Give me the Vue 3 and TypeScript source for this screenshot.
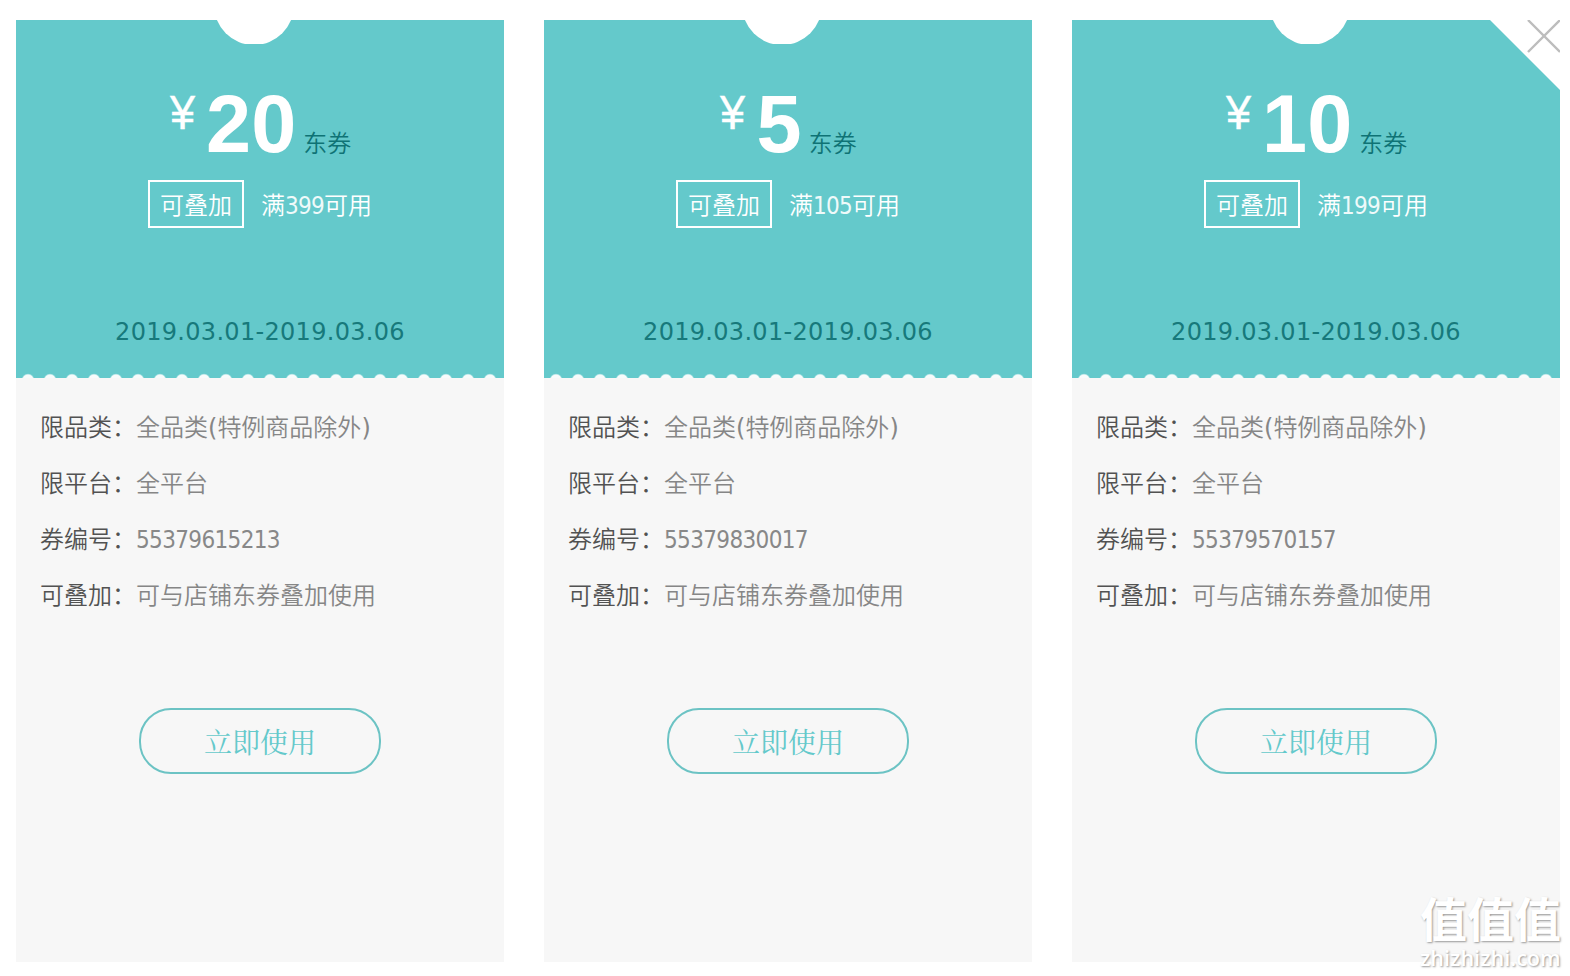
<template>
  <div class="coupon-page">
    <div v-for="(item, index) in coupons" :key="item.code" class="coupon">
      <div class="coupon-head">
        <div class="notch"><i></i></div>
        <div class="price">
          <span class="symbol">¥</span>
          <strong class="amount">{{ item.amount }}</strong>
          <span class="kind">东券</span>
        </div>
        <div class="condition">
          <span class="tag">可叠加</span>
          <span>满<span class="num">{{ item.limit }}</span>可用</span>
        </div>
        <div class="date">{{ item.date }}</div>
        <svg v-if="index === coupons.length - 1" class="corner" viewBox="0 0 72 72">
          <path d="M2 0H72V70Z" fill="#fff" />
          <path d="M40 0L72 32M72 0L40 32" stroke="#bdbdbd" stroke-width="2.4" />
        </svg>
      </div>
      <div class="coupon-body">
        <div v-for="row in getRows(item)" :key="row.label" class="row">
          <span class="label">{{ row.label }}：</span>
          <span class="value" :class="{ num: row.isNum }">{{ row.value }}<template v-if="row.note"><span class="paren">(</span>{{ row.note }}<span class="paren">)</span></template></span>
        </div>
        <button class="use-btn">立即使用</button>
      </div>
    </div>
    <div class="watermark">
      <div class="mark-name">值值值</div>
      <div class="mark-site">zhizhizhi.com</div>
    </div>
  </div>
</template>

<script setup lang="ts">
import { ref } from 'vue'

interface Coupon {
  amount: number
  limit: number
  date: string
  code: string
}

interface Row {
  label: string
  value: string
  note?: string
  isNum?: boolean
}

const coupons = ref<Coupon[]>([
  { amount: 20, limit: 399, date: '2019.03.01-2019.03.06', code: '55379615213' },
  { amount: 5, limit: 105, date: '2019.03.01-2019.03.06', code: '55379830017' },
  { amount: 10, limit: 199, date: '2019.03.01-2019.03.06', code: '55379570157' },
])

const getRows = (item: Coupon): Row[] => [
  { label: '限品类', value: '全品类', note: '特例商品除外' },
  { label: '限平台', value: '全平台' },
  { label: '券编号', value: item.code, isNum: true },
  { label: '可叠加', value: '可与店铺东券叠加使用' },
]
</script>

<style>
body {
  margin: 0;
  background: #fff;
}
</style>

<style scoped>
.coupon-page {
  position: relative;
  box-sizing: border-box;
  width: 1570px;
  height: 976px;
  padding: 20px 10px 14px 16px;
  display: flex;
  gap: 40px;
  overflow: hidden;
  font-family: "Noto Sans CJK SC", sans-serif;
  font-size: 24px;
  font-weight: 350;
}

.coupon {
  width: 488px;
  height: 942px;
  background: #f7f7f7;
}

.coupon-head {
  position: relative;
  box-sizing: border-box;
  height: 358px;
  padding-top: 62px;
  background: #64c9cb;
  color: #fff;
}

/* 底部锯齿 */
.coupon-head::after {
  content: "";
  position: absolute;
  left: 1px;
  right: 0;
  bottom: 0;
  height: 5px;
  background: radial-gradient(circle at 11px 7px, #f7fbfb 5px, transparent 6.6px) 0 0 / 22px 5px repeat-x;
}

.notch {
  position: absolute;
  top: 0;
  left: 196px;
  width: 84px;
  height: 24px;
  overflow: hidden;
}

.notch i {
  display: block;
  width: 80px;
  height: 80px;
  margin: -55px auto 0;
  border-radius: 50%;
  background: #fff;
}

.price {
  display: flex;
  justify-content: center;
  height: 80px;
}

.symbol {
  margin-right: 10px;
  font: 49px/60px "Liberation Sans", Arial, sans-serif;
  transform: scaleX(0.92);
  -webkit-text-stroke: 0.4px #fff;
}

.amount {
  font: bold 81px/84px "Liberation Sans", Arial, sans-serif;
}

.kind {
  margin-left: 7px;
  line-height: 119px;
  color: #0f7375;
}

.condition {
  display: flex;
  justify-content: center;
  gap: 17px;
  margin-top: 18px;
  line-height: 48px;
}

.tag {
  box-sizing: border-box;
  width: 96px;
  height: 48px;
  padding: 0 10px;
  border: 2px solid #fff;
  line-height: 44px;
}

.num {
  font-family: "DejaVu Sans Condensed", "DejaVu Sans", Tahoma, sans-serif;
  font-stretch: condensed;
  font-weight: 400;
  letter-spacing: -0.7px;
}

.condition .num {
  color: #effafa;
}

.paren {
  font-family: "DejaVu Sans", Tahoma, sans-serif;
  font-weight: 400;
  line-height: 1;
}

.date {
  margin-top: 82px;
  font: 24px/40px "DejaVu Sans", Verdana, sans-serif;
  letter-spacing: 0.3px;
  text-align: center;
  color: #17797b;
}

.corner {
  position: absolute;
  top: 0;
  right: 0;
  width: 72px;
  height: 72px;
}

.coupon-body {
  padding: 20px 24px 0;
}

.row {
  display: flex;
  height: 56px;
  line-height: 56px;
}

.label {
  width: 96px;
  color: #525252;
}

.value {
  color: #868686;
}

.value.num {
  line-height: 60px;
  letter-spacing: -0.65px;
  color: #888;
}

.use-btn {
  display: block;
  box-sizing: border-box;
  width: 242px;
  height: 66px;
  margin: 86px auto 0;
  padding: 0;
  border: 2px solid #6cc3c4;
  border-radius: 32px;
  background: transparent;
  color: #64c9cb;
  font: 28px "Noto Serif CJK SC", SimSun, serif;
}

.watermark {
  position: absolute;
  left: 1420px;
  top: 890px;
  width: 150px;
  color: #fff;
  text-shadow: 1px 1px 2px #999;
}

.mark-name {
  font-size: 47px;
  font-weight: 700;
  line-height: 54px;
}

.mark-site {
  margin-top: 1px;
  font: 600 21.6px/26px "Open Sans", sans-serif;
}
</style>
